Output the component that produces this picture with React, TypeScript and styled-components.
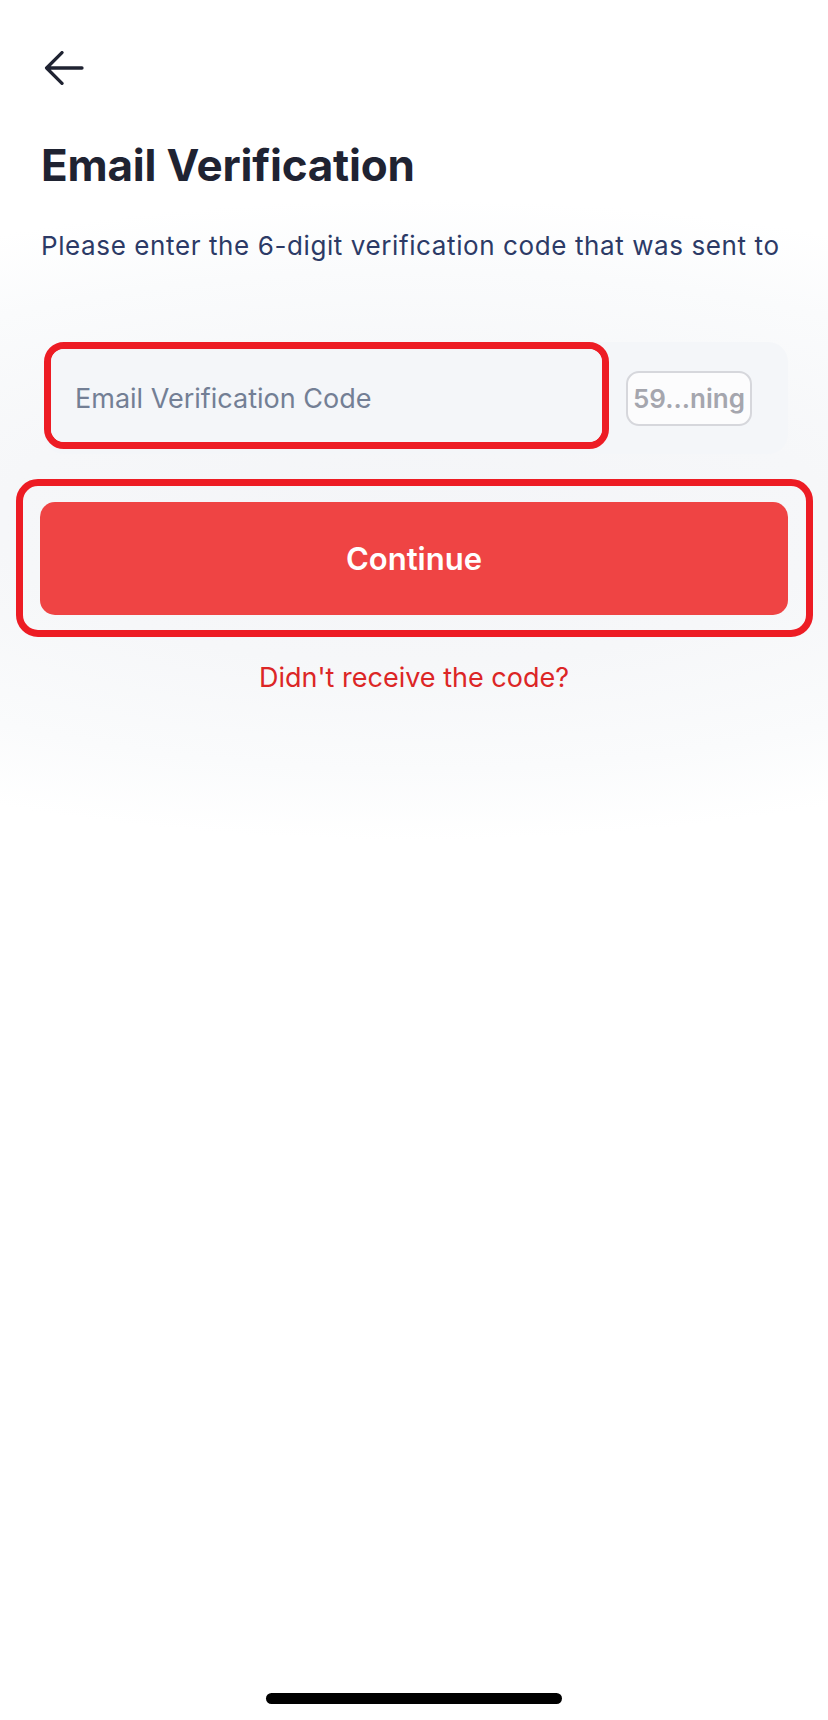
import styled, { createGlobalStyle } from "styled-components";

const GlobalStyle = createGlobalStyle`
  * {
    box-sizing: border-box;
  }

  body {
    margin: 0;
    background: #ffffff;
    font-family: Inter, "Noto Sans", "Liberation Sans", sans-serif;
    -webkit-font-smoothing: antialiased;
  }
`;

function BackArrow() {
  return (
    <svg width="40" height="34" viewBox="0 0 40 34" fill="none">
      <path
        d="M38 17H2.6M18 1.6L2.6 17L18 32.4"
        stroke="#1f2332"
        strokeWidth="3.3"
        strokeLinecap="round"
        strokeLinejoin="round"
      />
    </svg>
  );
}

export default function App() {
  return (
    <>
      <GlobalStyle />
      <Screen>
        <Content>
          <BackButton aria-label="Back">
            <BackArrow />
          </BackButton>

          <Title>Email Verification</Title>
          <Subtitle>Please enter the 6-digit verification code that was sent to</Subtitle>

          <CodeRow>
            <Highlight $radius={20}>
              <CodeInput placeholder="Email Verification Code" />
            </Highlight>
            <ResendBadge>59...ning</ResendBadge>
          </CodeRow>

          <ButtonHighlight $radius={22}>
            <PrimaryButton type="button">Continue</PrimaryButton>
          </ButtonHighlight>

          <LinkText>Didn't receive the code?</LinkText>
        </Content>

        <HomeIndicator />
      </Screen>
    </>
  );
}

const Screen = styled.div`
  display: flex;
  flex-direction: column;
  width: 828px;
  min-height: 1720px;
  background: radial-gradient(
    ellipse 920px 320px at 50% 520px,
    #f4f5f8 0%,
    #f6f7f9 45%,
    #fafbfc 78%,
    #ffffff 100%
  );
`;

const Content = styled.div`
  display: flex;
  flex-direction: column;
  padding: 51px 40px 0 40px;
`;

const BackButton = styled.button`
  display: flex;
  align-self: flex-start;
  width: 40px;
  height: 34px;
  margin-left: 4px;
  padding: 0;
  border: none;
  background: transparent;
  cursor: pointer;
`;

const Title = styled.h1`
  margin: 54px 0 0 1px;
  font-size: 44px;
  line-height: 52px;
  font-weight: 700;
  letter-spacing: -0.2px;
  color: #1f2332;
`;

const Subtitle = styled.p`
  margin: 38px 0 0 1px;
  font-size: 26px;
  line-height: 34px;
  font-weight: 400;
  letter-spacing: 0.6px;
  color: #2c3a66;
  white-space: nowrap;
`;

const CodeRow = styled.div`
  display: flex;
  align-items: center;
  gap: 17px;
  height: 112px;
  margin: 79px 0 0 4px;
  border-radius: 20px;
  background: #f4f6f9;
`;

// red annotation frame drawn over the original screenshot
const Highlight = styled.div<{ $radius: number }>`
  display: flex;
  align-self: flex-start;
  border: 7px solid #ed1c24;
  border-radius: ${({ $radius }) => $radius}px;
`;

const CodeInput = styled.input`
  width: 551px;
  height: 93px;
  padding: 6px 0 0 24px;
  border: none;
  border-radius: 13px;
  outline: none;
  background: #f4f6f9;
  font-family: inherit;
  font-size: 27px;
  color: #1f2332;

  &::placeholder {
    color: #737f95;
  }
`;

const ResendBadge = styled.div`
  display: flex;
  align-items: center;
  justify-content: center;
  width: 126px;
  height: 55px;
  padding: 0 2px;
  overflow: hidden;
  border: 2px solid #d6d7dc;
  border-radius: 13px;
  background: #fcfcfd;
  font-size: 26px;
  font-weight: 600;
  color: #a5a6ae;
  white-space: nowrap;
`;

const ButtonHighlight = styled(Highlight)`
  align-self: stretch;
  margin: 25px -25px 0 -24px;
  padding: 16px 18px 15px 17px;
`;

const PrimaryButton = styled.button`
  flex: 1;
  height: 113px;
  border: none;
  border-radius: 15px;
  background: #ef4444;
  font-family: inherit;
  font-size: 31px;
  font-weight: 600;
  color: #ffffff;
  cursor: pointer;
`;

const LinkText = styled.div`
  margin-top: 23px;
  font-size: 27px;
  line-height: 36px;
  text-align: center;
  color: #dc2626;
  cursor: pointer;
`;

const HomeIndicator = styled.div`
  align-self: center;
  width: 296px;
  height: 11px;
  margin: auto 0 16px 0;
  border-radius: 6px;
  background: #000000;
`;
